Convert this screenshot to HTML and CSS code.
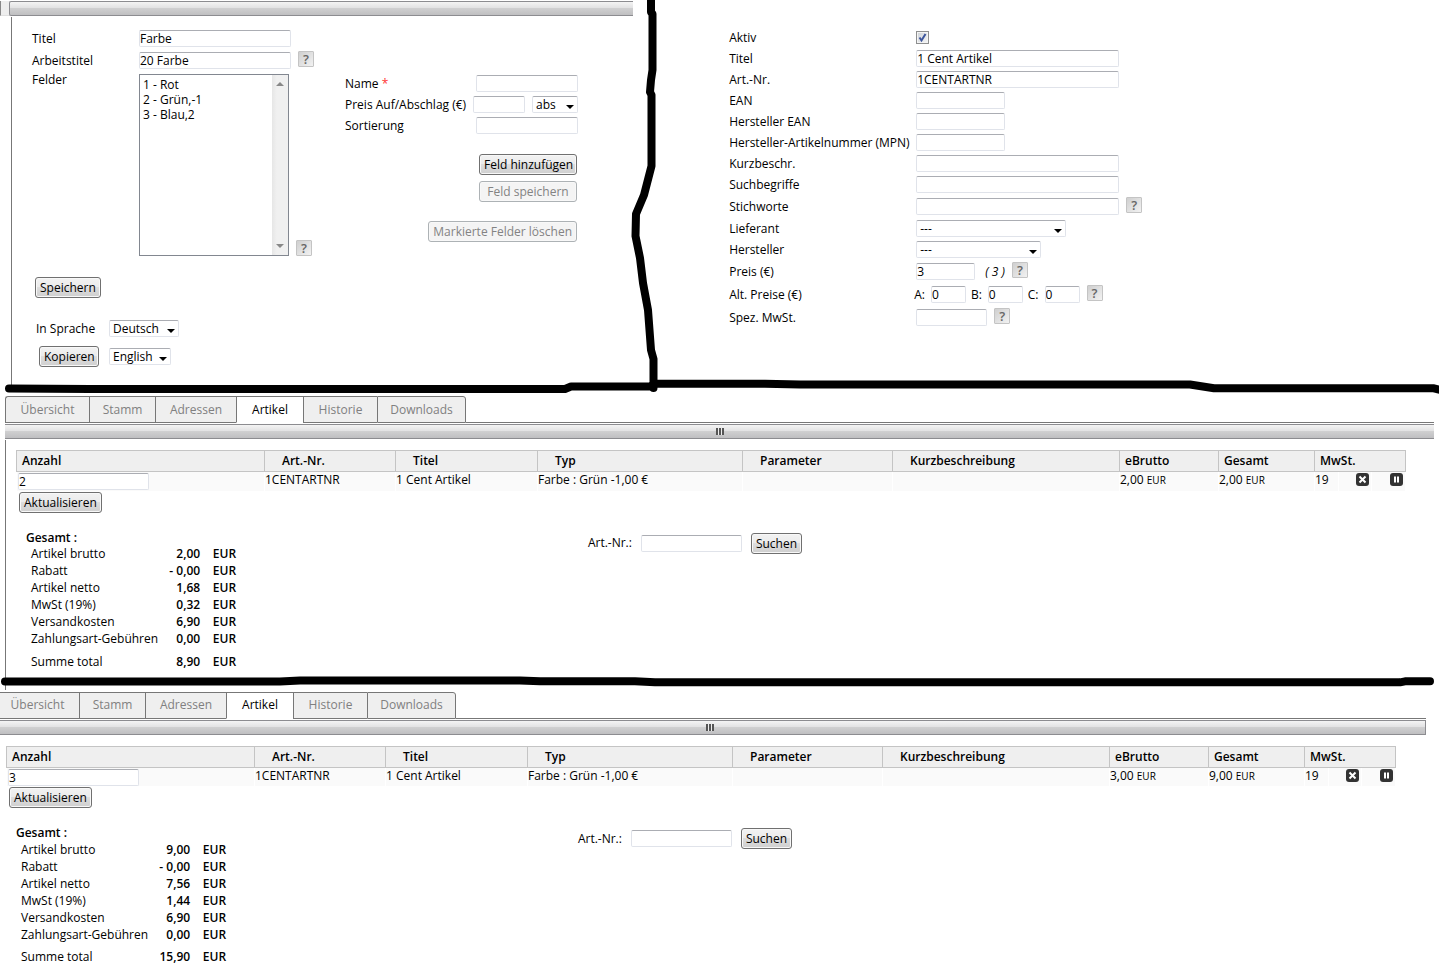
FILE: index.html
```html
<!DOCTYPE html>
<html lang="de">
<head>
<meta charset="utf-8">
<title>Artikelverwaltung</title>
<link rel="stylesheet" href="styles.css">
</head>
<body>
<main class="page">
  <div class="top">
    <section class="panel">
      <div class="splitter-row"><span class="splitter-stub"></span><div class="splitter capped-left"></div></div>
      <form class="panel-body">
        <div class="field-area">
          <div class="base-fields">
            <div class="row"><label class="name" for="f-titel">Titel</label><input class="text w-152" id="f-titel" value="Farbe"></div>
            <div class="row tall"><label class="name" for="f-arbeit">Arbeitstitel</label><input class="text w-152" id="f-arbeit" value="20 Farbe"><button type="button" class="help">?</button></div>
            <div class="row list-row"><label class="name" for="f-felder">Felder</label>
              <div class="listbox">
                <select id="f-felder" multiple size="12"><option>1 - Rot</option><option>2 - Grün,-1</option><option>3 - Blau,2</option></select>
                <span class="scroll"><i class="up"></i><i class="down"></i></span>
              </div>
              <button type="button" class="help">?</button></div>
          </div>
          <div class="edit-fields">
            <div class="row spread"><label for="f-name">Name <span class="req">*</span></label><input class="text w-102" id="f-name"></div>
            <div class="row spread"><label for="f-preis">Preis Auf/Abschlag (€)</label><span class="pair"><input class="text w-52" id="f-preis"><span class="drop w-46"><select aria-label="Art"><option>abs</option></select></span></span></div>
            <div class="row spread"><label for="f-sort">Sortierung</label><input class="text w-102" id="f-sort"></div>
            <div class="actions">
              <button type="button" class="btn w-98">Feld hinzufügen</button>
              <button type="button" class="btn w-98" disabled>Feld speichern</button>
              <button type="button" class="btn remove" disabled>Markierte Felder löschen</button>
            </div>
          </div>
        </div>
        <button type="button" class="btn save">Speichern</button>
        <div class="lang"><label for="f-lang">In Sprache</label><span class="drop w-70"><select id="f-lang"><option>Deutsch</option></select></span></div>
        <div class="lang copy"><button type="button" class="btn">Kopieren</button><span class="drop w-62"><select aria-label="Zielsprache"><option>English</option></select></span></div>
      </form>
    </section>

    <form class="article">
      <div class="row"><label class="key" for="a-aktiv">Aktiv</label><span class="tick"><input type="checkbox" id="a-aktiv" checked><svg viewBox="0 0 13 13" aria-hidden="true"><path d="M3.5 6.5L5.5 9.5L9.5 3"/></svg></span></div>
      <div class="row"><label class="key" for="a-titel">Titel</label><input class="text w-203" id="a-titel" value="1 Cent Artikel"></div>
      <div class="row"><label class="key" for="a-nr">Art.-Nr.</label><input class="text w-203" id="a-nr" value="1CENTARTNR"></div>
      <div class="row"><label class="key" for="a-ean">EAN</label><input class="text w-89" id="a-ean"></div>
      <div class="row"><label class="key" for="a-hean">Hersteller EAN</label><input class="text w-89" id="a-hean"></div>
      <div class="row"><label class="key" for="a-mpn">Hersteller-Artikelnummer (MPN)</label><input class="text w-89" id="a-mpn"></div>
      <div class="row"><label class="key" for="a-kurz">Kurzbeschr.</label><input class="text w-203" id="a-kurz"></div>
      <div class="row"><label class="key" for="a-such">Suchbegriffe</label><input class="text w-203" id="a-such"></div>
      <div class="row tall"><label class="key" for="a-stich">Stichworte</label><input class="text w-203" id="a-stich"><button type="button" class="help">?</button></div>
      <div class="row"><label class="key" for="a-lief">Lieferant</label><span class="drop w-150"><select id="a-lief"><option>---</option></select></span></div>
      <div class="row"><label class="key" for="a-herst">Hersteller</label><span class="drop w-125"><select id="a-herst"><option>---</option></select></span></div>
      <div class="row tall"><label class="key" for="a-preis">Preis (€)</label><input class="text w-59" id="a-preis" value="3"><em class="calc">( 3 )</em><button type="button" class="help">?</button></div>
      <div class="row tall"><span class="key alt">Alt. Preise (€)</span><label class="abc" for="a-a">A:</label><input class="text w-35" id="a-a" value="0"><label class="abc next" for="a-b">B:</label><input class="text w-35" id="a-b" value="0"><label class="abc next" for="a-c">C:</label><input class="text w-35" id="a-c" value="0"><button type="button" class="help">?</button></div>
      <div class="row tall"><label class="key" for="a-mwst">Spez. MwSt.</label><input class="text w-71" id="a-mwst"><button type="button" class="help">?</button></div>
    </form>
  </div>

  <section class="order first">
    <nav class="tabs"><button>Übersicht</button><button>Stamm</button><button>Adressen</button><button class="active">Artikel</button><button>Historie</button><button>Downloads</button><span class="rest"></span></nav>
    <div class="splitter"><i class="grip"></i></div>
    <form class="order-body">
      <table class="items">
        <colgroup><col class="c1"><col class="c2"><col class="c3"><col class="c4"><col class="c5"><col class="c6"><col class="c7"><col class="c8"><col class="c9"><col class="c10"><col class="c11"></colgroup>
        <thead><tr><th>Anzahl</th><th class="in">Art.-Nr.</th><th class="in">Titel</th><th class="in">Typ</th><th class="in">Parameter</th><th class="in">Kurzbeschreibung</th><th>eBrutto</th><th>Gesamt</th><th colspan="3">MwSt.</th></tr></thead>
        <tbody><tr><td><input class="text w-131" aria-label="Anzahl" value="2"></td><td>1CENTARTNR</td><td>1 Cent Artikel</td><td>Farbe : Grün -1,00 €</td><td></td><td></td><td>2,00 <small>EUR</small></td><td>2,00 <small>EUR</small></td><td>19</td>
          <td class="act"><button type="button" class="icon" aria-label="Löschen"><svg viewBox="0 0 13 13"><rect width="13" height="13" rx="3"/><path d="M3.5 3.5L9.5 9.5M9.5 3.5L3.5 9.5"/></svg></button></td>
          <td class="act"><button type="button" class="icon" aria-label="Pause"><svg viewBox="0 0 13 13"><rect width="13" height="13" rx="3"/><path d="M5 3.5V9.5M8 3.5V9.5"/></svg></button></td></tr></tbody>
      </table>
      <button type="button" class="btn update">Aktualisieren</button>
      <div class="lower">
        <div class="sums">
          <h2>Gesamt :</h2>
          <table>
            <tr><th>Artikel brutto</th><td>2,00</td><td>EUR</td></tr>
            <tr><th>Rabatt</th><td>- 0,00</td><td>EUR</td></tr>
            <tr><th>Artikel netto</th><td>1,68</td><td>EUR</td></tr>
            <tr><th>MwSt (19%)</th><td>0,32</td><td>EUR</td></tr>
            <tr><th>Versandkosten</th><td>6,90</td><td>EUR</td></tr>
            <tr><th>Zahlungsart-Gebühren</th><td>0,00</td><td>EUR</td></tr>
            <tr class="total"><th>Summe total</th><td>8,90</td><td>EUR</td></tr>
          </table>
        </div>
        <div class="search"><label for="s1">Art.-Nr.:</label><input class="text w-101" id="s1"><button type="button" class="btn">Suchen</button></div>
      </div>
    </form>
  </section>

  <section class="order second">
    <nav class="tabs"><button>Übersicht</button><button>Stamm</button><button>Adressen</button><button class="active">Artikel</button><button>Historie</button><button>Downloads</button><span class="rest"></span></nav>
    <div class="splitter capped-right"><i class="grip"></i></div>
    <form class="order-body">
      <table class="items">
        <colgroup><col class="c1"><col class="c2"><col class="c3"><col class="c4"><col class="c5"><col class="c6"><col class="c7"><col class="c8"><col class="c9"><col class="c10"><col class="c11"></colgroup>
        <thead><tr><th>Anzahl</th><th class="in">Art.-Nr.</th><th class="in">Titel</th><th class="in">Typ</th><th class="in">Parameter</th><th class="in">Kurzbeschreibung</th><th>eBrutto</th><th>Gesamt</th><th colspan="3">MwSt.</th></tr></thead>
        <tbody><tr><td><input class="text w-131" aria-label="Anzahl" value="3"></td><td>1CENTARTNR</td><td>1 Cent Artikel</td><td>Farbe : Grün -1,00 €</td><td></td><td></td><td>3,00 <small>EUR</small></td><td>9,00 <small>EUR</small></td><td>19</td>
          <td class="act"><button type="button" class="icon" aria-label="Löschen"><svg viewBox="0 0 13 13"><rect width="13" height="13" rx="3"/><path d="M3.5 3.5L9.5 9.5M9.5 3.5L3.5 9.5"/></svg></button></td>
          <td class="act"><button type="button" class="icon" aria-label="Pause"><svg viewBox="0 0 13 13"><rect width="13" height="13" rx="3"/><path d="M5 3.5V9.5M8 3.5V9.5"/></svg></button></td></tr></tbody>
      </table>
      <button type="button" class="btn update">Aktualisieren</button>
      <div class="lower">
        <div class="sums">
          <h2>Gesamt :</h2>
          <table>
            <tr><th>Artikel brutto</th><td>9,00</td><td>EUR</td></tr>
            <tr><th>Rabatt</th><td>- 0,00</td><td>EUR</td></tr>
            <tr><th>Artikel netto</th><td>7,56</td><td>EUR</td></tr>
            <tr><th>MwSt (19%)</th><td>1,44</td><td>EUR</td></tr>
            <tr><th>Versandkosten</th><td>6,90</td><td>EUR</td></tr>
            <tr><th>Zahlungsart-Gebühren</th><td>0,00</td><td>EUR</td></tr>
            <tr class="total"><th>Summe total</th><td>15,90</td><td>EUR</td></tr>
          </table>
        </div>
        <div class="search"><label for="s2">Art.-Nr.:</label><input class="text w-101" id="s2"><button type="button" class="btn">Suchen</button></div>
      </div>
    </form>
  </section>

  <!-- hand-drawn dividers between the three areas -->
  <svg class="strokes" viewBox="0 0 1439 970" preserveAspectRatio="none" aria-hidden="true">
    <path d="M651 -4L651 12L652.5 14V70L651 80L650 92L651.5 95V166L644 195L636 214L635.5 236L640 258L643 283L648 310L651 350L653.5 359V388"/>
    <path d="M9 388.5L90 389H565L571 386.5H650L655 383.7H765L800 384.5H1190L1214 388.3H1434L1444 391"/>
    <path d="M5 681.5H280L300 680.5H520L540 681.3H635L655 682.3H1400L1405 681.3H1430"/>
  </svg>
</main>
</body>
</html>
```
FILE: styles.css
```css
* { box-sizing: border-box; }
body {
  margin: 0;
  background: #fff;
  color: #000;
  font: 12px/16px "Open Sans", "Noto Sans", sans-serif;
}
button, input, select { font: inherit; color: inherit; margin: 0; }
.page { position: relative; overflow: hidden; }
.strokes {
  position: absolute;
  inset: 0;
  width: 100%;
  height: 970px;
  fill: none;
  stroke: #000;
  stroke-width: 8px;
  stroke-linecap: round;
  stroke-linejoin: round;
  pointer-events: none;
}

/* two forms on top */
.top { display: grid; grid-template-columns: 44% 1fr; }
.splitter-row { display: flex; padding-top: 1px; }
.splitter-stub {
  width: 9px;
  border-left: 1px solid #888;
  border-bottom: 1px solid #e0e0e0;
  background: #eee;
}
.splitter {
  flex: 1;
  height: 15px;
  display: flex;
  justify-content: center;
  align-items: center;
  border: solid #8c8c90;
  border-width: 1px 0;
  background: linear-gradient(#f4f4f4, #e2e2e3 45%, #cfcfd0 50%, #bfbfc1);
}
.capped-left { border-left-width: 1px; border-radius: 2px 0 0 2px; }
.capped-right { border-right-width: 1px; }
.grip {
  width: 8px;
  height: 7px;
  background: repeating-linear-gradient(90deg, #555 0 2px, #eee 2px 3px);
}
.panel { display: flex; flex-direction: column; }
.panel-body {
  flex: 1;
  margin: 1px 0 8px 11px;
  padding: 11px 0 21px 20px;
  border-left: 1px solid #777;
}
.field-area { display: flex; gap: 31px; }
.row { display: flex; align-items: center; min-height: 21px; }
.row.tall { min-height: 23px; }
.name { width: 107px; }
.list-row { align-items: flex-start; padding-top: 2px; }
.list-row .name { line-height: 12px; }
.list-row .help { align-self: flex-end; }
.key { width: 187px; white-space: nowrap; }
.key.alt { width: 185px; }
.edit-fields { width: 233px; padding-top: 45px; }
.spread { justify-content: space-between; white-space: nowrap; }
.pair { display: flex; gap: 7px; }
.req { color: #f33; }

.text {
  height: 17px;
  padding: 0;
  border: 1px solid #e0e3ea;
  border-top-color: #abadb3;
  border-radius: 2px;
  background: #fff;
}
.drop { position: relative; display: inline-flex; }
.drop select {
  width: 100%;
  height: 17px;
  padding: 0 3px;
  border: 1px solid #e0e3ea;
  border-top-color: #abadb3;
  border-radius: 2px;
  background: #fff;
  appearance: none;
  line-height: 15px;
}
.drop::after {
  content: "";
  position: absolute;
  right: 4px;
  top: 9px;
  border: 4px solid transparent;
  border-top-color: #000;
  border-bottom: 0;
}
.w-35 { width: 35px; }
.w-46 { width: 46px; }
.w-52 { width: 52px; }
.w-59 { width: 59px; }
.w-62 { width: 62px; }
.w-70 { width: 70px; }
.w-71 { width: 71px; }
.w-89 { width: 89px; }
.w-98 { width: 98px; }
.w-101 { width: 101px; }
.w-102 { width: 102px; }
.w-125 { width: 125px; }
.w-131 { width: 131px; }
.w-150 { width: 150px; }
.w-152 { width: 152px; }
.w-203 { width: 203px; }

.listbox { position: relative; width: 150px; height: 182px; }
.listbox select {
  width: 100%;
  height: 100%;
  padding: 1px 0;
  border: 1px solid #828790;
  border-radius: 0;
  background: #fff;
  overflow: hidden;
}
.listbox option { height: 15px; min-height: 0; padding: 0 3px; line-height: 15px; }
.scroll {
  position: absolute;
  inset: 1px 1px 1px auto;
  width: 16px;
  background: linear-gradient(90deg, #e6e6e6, #f0f0f0 30%);
  display: flex;
  flex-direction: column;
  justify-content: space-between;
  align-items: center;
  padding: 7px 0;
}
.scroll i { border: 4px solid transparent; }
.scroll .up { border-bottom-color: #888; border-top: 0; }
.scroll .down { border-top-color: #888; border-bottom: 0; }

.help {
  align-self: flex-start;
  width: 16px;
  height: 16px;
  margin: 2px 0 0 7px;
  padding: 0;
  border: 1px solid #c4c4c4;
  border-radius: 1px;
  background: linear-gradient(135deg, #cfcfcf, #f2f2f2);
  color: #666;
  font-size: 13px;
  font-weight: 600;
  line-height: 14px;
}
.btn {
  height: 21px;
  padding: 0 4px;
  border: 1px solid #707070;
  border-radius: 3px;
  background: linear-gradient(#f2f2f2, #ebebeb 49%, #dddddd 50%, #cfcfcf);
  box-shadow: inset 0 0 0 1px #f8f8f8;
  line-height: 19px;
  white-space: nowrap;
}
.btn:disabled { border-color: #adb2b5; background: #f4f4f4; color: #838383; }
.actions {
  display: flex;
  flex-direction: column;
  align-items: flex-end;
  gap: 6px;
  padding: 18px 1px 0 0;
}
.actions .remove { margin-top: 13px; }
.save { display: block; margin: 21px 0 0 3px; }
.lang { display: flex; align-items: center; gap: 10px; height: 17px; margin-top: 22px; padding-left: 4px; }
.lang label { width: 63px; }
.copy { height: 21px; margin-top: 9px; padding-left: 7px; }
.copy .btn { width: 60px; }

.article { padding: 27px 0 0 96px; }
.tick { position: relative; display: flex; }
.tick input {
  width: 13px;
  height: 13px;
  border: 1px solid #8e8f8f;
  background: linear-gradient(135deg, #cdd2d8, #f6f6f6);
  box-shadow: inset 0 0 0 1px #f4f4f4;
  appearance: none;
}
.tick svg { position: absolute; inset: 0; fill: none; stroke: #3d559c; stroke-width: 2; pointer-events: none; }
.calc { margin-left: 10px; }
.abc { margin-right: 6px; }
.abc.next { margin-left: 5px; }

/* order views */
.order.first { margin: 0 5px; }
.order.second { margin: 0 13px 0 -5px; }
.tabs { display: flex; height: 27px; margin-bottom: 1px; }
.tabs button {
  width: 74px;
  padding: 0;
  border: 1px solid #777;
  border-right-width: 0;
  background: #efefef;
  color: #808080;
}
.tabs button:nth-child(1) { width: 84px; border-top-left-radius: 3px; }
.tabs button:nth-child(2) { width: 66px; }
.tabs button:nth-child(3) { width: 81px; }
.tabs button:nth-child(4) { width: 67px; }
.tabs button:nth-child(6) { width: 89px; border-right-width: 1px; border-top-right-radius: 3px; }
.tabs .active { background: #fff; color: #000; border-bottom-color: #fff; }
.rest { flex: 1; border-bottom: 1px solid #777; }
.order-body { margin-top: 1px; padding: 10px 30px 0 10px; border-left: 1px solid #777; }
.first .order-body { padding: 10px 28px 20px 10px; margin-bottom: 2px; }
.items { width: 100%; table-layout: fixed; border-collapse: collapse; }
.items th {
  height: 21px;
  padding: 0 5px;
  border: 1px solid #c4c4c4;
  background: #efefef;
  text-align: left;
  font-weight: 600;
}
.items th.in { padding-left: 17px; }
.items td {
  height: 19px;
  padding: 0;
  border: solid #fff;
  border-width: 0 1px;
  background: #fafafa;
  vertical-align: top;
  white-space: nowrap;
  line-height: 15px;
}
.items td .text { display: block; margin: 1px 0 0 1px; }
.items small { font-size: 10px; line-height: 12px; }
.c1 { width: 248px; }
.c2 { width: 131px; }
.c3 { width: 142px; }
.c4 { width: 205px; }
.c5 { width: 150px; }
.c6 { width: 227px; }
.c7 { width: 99px; }
.c8 { width: 96px; }
.c9 { width: 24px; }
.c10 { width: 33px; }
.c11 { width: 34px; }
.items .act { text-align: right; }
.icon { display: block; width: 13px; height: 13px; margin: 1px 2px 0 auto; padding: 0; border: 0; background: none; }
.icon svg { display: block; fill: #333; stroke: #fff; stroke-width: 2; }
.icon rect { stroke: none; }
.update { display: block; margin: 1px 0 0 3px; }
.lower { display: flex; align-items: flex-start; padding-top: 17px; }
.sums { width: 41%; padding-left: 10px; }
.sums h2 { margin: 0; font-size: 12px; line-height: 16px; font-weight: 600; }
.sums table { margin-left: 5px; border-collapse: collapse; }
.sums th { width: 124px; padding: 0; text-align: left; font-weight: 400; white-space: nowrap; }
.sums td { height: 17px; padding: 0; text-align: right; font-weight: 600; white-space: nowrap; line-height: 16px; }
.sums td:nth-child(2) { width: 42px; }
.sums td:nth-child(3) { width: 36px; }
.sums .total > * { padding-top: 6px; }
.search { display: flex; align-items: center; padding: 3px 0 0 2px; }
.search .text { margin: 0 9px; }
```
